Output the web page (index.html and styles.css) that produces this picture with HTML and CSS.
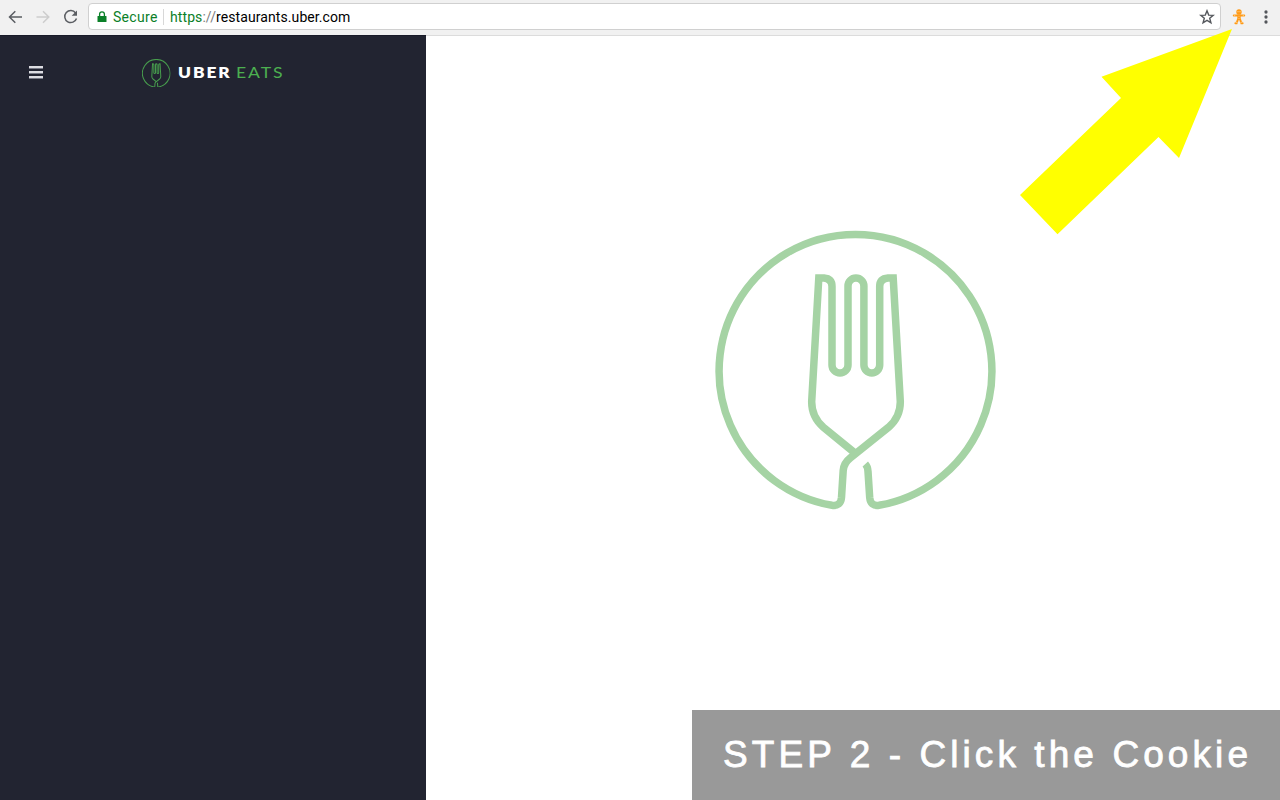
FILE: index.html
```html
<!DOCTYPE html>
<html lang="en">
<head>
<meta charset="utf-8">
<title>Uber Eats Restaurants</title>
<link rel="stylesheet" href="styles.css">
</head>
<body>
<svg class="defs" width="0" height="0" aria-hidden="true">
  <symbol id="fork" viewBox="0 0 281 281">
    <path fill="none" stroke="currentColor" stroke-linejoin="miter" d="M150.300 234 Q152.700 236.500 153 241.500 L154.700 267.500 Q155.500 276.500 164 275.300 A136.400 136.400 0 1 0 117 275.300 Q125.700 276.500 126.500 267.500 L128.200 240.500 Q128.700 233 135.500 227.700 L173.500 197.300 Q185.500 187 185.300 171.500 L178.200 47.900 H173 Q164.700 48.500 164.700 56.500 V135 A7.900 7.900 0 0 1 148.900 135 V56 A7.900 7.900 0 0 0 133 56 V135 A7.900 7.900 0 0 1 117 135 V56.500 Q117 48.500 109 47.900 H103.800 L96.700 171.500 Q96.500 187 108.500 197.300 L140.500 223.500"/>
  </symbol>
</svg>
<header class="toolbar">
  <svg class="nav" viewBox="0 0 16 16"><path d="M15 8H2.500M8.300 2.200L2.500 8L8.300 13.800"/></svg>
  <svg class="nav disabled" viewBox="0 0 16 16"><path d="M1.500 8H13.500M8 2.200L13.800 8L8 13.800"/></svg>
  <svg class="nav" viewBox="0 0 16 16"><path d="M12.600 4A6 6 0 1 0 13.500 9.400"/><path class="tip" d="M14 1.500V6.700H8.700Z"/></svg>
  <div class="address">
    <svg class="lock" viewBox="0 0 10 12"><path fill="currentColor" d="M1 5H9Q9.500 5 9.500 5.500V10.500Q9.500 11 9 11H1Q.5 11 .5 10.500V5.500Q.5 5 1 5Z"/><path fill="none" stroke="currentColor" stroke-width="1.300" d="M2.600 5.500V3.300A2.400 2.400 0 0 1 7.400 3.300V5.500"/></svg>
    <span class="secure">Secure</span>
    <span class="url"><span class="scheme">https</span><span class="slashes">://</span>restaurants.uber.com</span>
    <svg class="star" viewBox="0 0 16 16"><path d="M8 1.800L9.700 6.100L14.200 6.400L10.700 9.300L11.900 13.800L8 11.300L4.100 13.800L5.300 9.300L1.800 6.400L6.300 6.100Z"/></svg>
  </div>
  <svg class="cookie" viewBox="0 0 16 18"><circle cx="8" cy="3.900" r="2.700"/><path class="body" d="M6.300 6.500H9.700V12H6.300Z"/><path d="M2.800 7.600H13.200M6.900 11.500L5.600 15.200H4.400M9.100 11.500L10.400 15.200H11.600"/><path class="icing" d="M6.700 3.700H7.300M8.700 3.700H9.300M7.900 8.300H8.100M7.900 10.500H8.100M3.700 7V8.200M12.300 7V8.200M4.700 14L6.200 14.500M9.800 14.500L11.300 14"/></svg>
  <svg class="dots" viewBox="0 0 4 14"><circle cx="2" cy="2" r="1.650"/><circle cx="2" cy="7" r="1.650"/><circle cx="2" cy="12" r="1.650"/></svg>
</header>
<main class="page">
  <aside class="sidebar">
    <div class="menu"><i></i><i></i><i></i></div>
    <svg class="mark"><use href="#fork"/></svg>
    <svg class="wordmark" viewBox="0 0 110 20"><text class="uber" x="0" y="15" textLength="53.500" lengthAdjust="spacingAndGlyphs">UBER</text><text class="eats" x="58" y="15" textLength="48.500" lengthAdjust="spacingAndGlyphs">EATS</text></svg>
  </aside>
  <section class="content">
    <svg class="fork"><use href="#fork"/></svg>
  </section>
</main>
<svg class="arrow" viewBox="0 0 213 206"><path fill="#ff0" d="M212 0L159 129L138.500 108L37.500 205.200L0 166L101 69L81.500 47.700Z"/></svg>
<div class="caption">STEP 2 - Click the Cookie</div>
</body>
</html>
```
FILE: styles.css
```css
* { box-sizing: border-box; }
body {
  margin: 0;
  width: 1280px;
  height: 800px;
  overflow: hidden;
  display: flex;
  flex-direction: column;
  position: relative;
  background: #fff;
  font-family: Roboto, "Liberation Sans", sans-serif;
}
svg { display: block; flex: none; }
.defs { position: absolute; }
.toolbar {
  height: 36px;
  padding: 0 0 2px 7px;
  display: flex;
  align-items: center;
  background: #f1f1f1;
  border-bottom: 1px solid #cfcfcf;
}
.nav {
  width: 16px;
  height: 16px;
  margin-right: 12px;
  fill: none;
  stroke: #5a5d62;
  stroke-width: 1.500;
}
.nav.disabled { stroke: #cdcdcd; }
.nav:nth-of-type(3) { margin-right: 9px; }
.tip { fill: #5a5d62; stroke: none; }
.address {
  width: 1133px;
  height: 27px;
  padding: 0 5px 0 8px;
  display: flex;
  align-items: center;
  background: #fff;
  border: 1px solid #d0d0d0;
  border-radius: 4px;
  font-size: 14px;
}
.lock { width: 10px; height: 12px; color: #0b8028; }
.secure {
  margin-left: 6px;
  width: 51px;
  height: 16px;
  line-height: 16px;
  border-right: 1px solid #d8d8d8;
  color: #0b8028;
  letter-spacing: .3px;
}
.url { margin-left: 6px; flex: 1; color: #000; letter-spacing: .085px; }
.scheme { color: #0b8028; }
.slashes { color: #808080; }
.star { width: 16px; height: 16px; fill: none; stroke: #55585d; stroke-width: 1.400; }
.cookie { width: 16px; height: 18px; margin-left: 10px; fill: none; stroke: #ff9a16; stroke-width: 2; stroke-linecap: round; }
.cookie circle, .cookie .body { fill: #ff9a16; stroke: none; }
.cookie .icing { stroke: #ffd59a; stroke-width: .8; }
.dots { width: 4px; height: 14px; margin-left: 17px; fill: #53565b; }
.page { flex: 1; display: flex; margin-top: -1px; }
.sidebar {
  width: 426px;
  padding: 22px 0 0 29px;
  display: flex;
  align-items: flex-start;
  background: #222431;
  border-top: 1px solid #191b29;
}
.menu { width: 14px; margin: 8px 99px 0 0; display: grid; gap: 2px; }
.menu i { height: 3px; background: #dddde2; border-bottom: 1px solid #777985; }
.mark { width: 28.500px; height: 28.500px; margin-top: .5px; color: #479c4d; stroke-width: 10; }
.wordmark { width: 110px; height: 20px; margin: 5px 0 0 7.500px; font-family: Lato, sans-serif; font-size: 14.500px; letter-spacing: 1.600px; }
.uber { fill: #fff; font-weight: 800; }
.eats { fill: #4caf50; }
.content { flex: 1; padding: 194px 0 0 289px; border-top: 1px solid #dcdcdc; }
.fork { width: 281px; height: 281px; color: #a5d3a4; stroke-width: 7.500; }
.arrow { position: absolute; left: 1020px; top: 29px; width: 213px; height: 206px; }
.caption {
  position: absolute;
  right: 0;
  bottom: 0;
  width: 588px;
  height: 90px;
  padding-left: 31px;
  background: #999;
  color: #fff;
  font: 37px/90px "Liberation Sans", sans-serif;
  letter-spacing: 4.080px;
  white-space: nowrap;
  -webkit-text-stroke: .8px #fff;
}
```
